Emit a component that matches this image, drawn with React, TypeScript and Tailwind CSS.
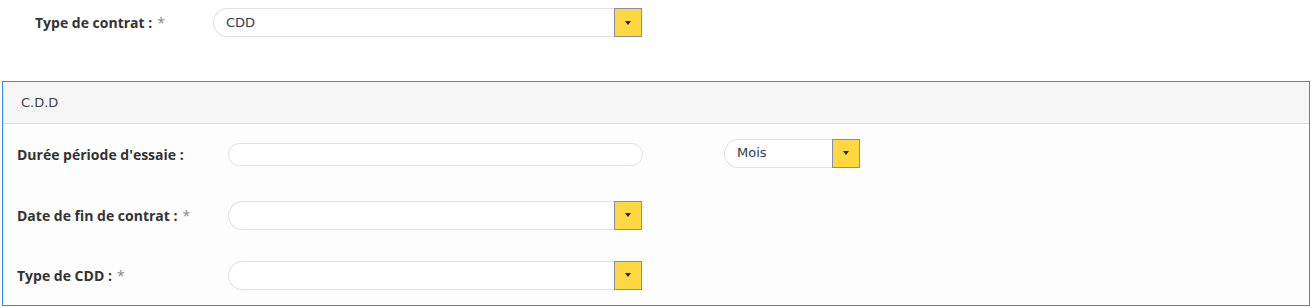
import React from "react";

function Caret() {
  return (
    <div className="w-[28px] h-full shrink-0 bg-[#ffd740] border border-[#8a8f99] flex items-center justify-center">
      <svg width="6" height="4" viewBox="0 0 6 4">
        <path d="M0 0H6L3 4Z" fill="#222" />
      </svg>
    </div>
  );
}

function Select({ value, width }: { value?: string; width: string }) {
  return (
    <div className={`${width} h-[29px] flex items-stretch`}>
      <div className="flex-1 rounded-l-[15px] border border-r-0 border-[#dde1e6] bg-white flex items-center pl-[12px] text-[13px] text-[#2c3e50]">
        {value}
      </div>
      <Caret />
    </div>
  );
}

function Label({ text, required }: { text: string; required?: boolean }) {
  return (
    <div className="text-[14px] font-bold text-[#333] font-['Open_Sans',sans-serif]">
      {text}
      {required && <span className="font-normal text-[#888] ml-[5px]">*</span>}
    </div>
  );
}

export default function App() {
  return (
    <div className="w-[1312px] h-[308px] bg-white font-['DejaVu_Sans',sans-serif]">
      {/* Top field */}
      <div className="flex items-center h-[45px]">
        <div className="w-[213px] pl-[35px]">
          <Label text="Type de contrat :" required />
        </div>
        <Select value="CDD" width="w-[429px]" />
      </div>

      {/* CDD panel */}
      <div className="mt-[36px] ml-[2px] w-[1308px] h-[225px] border border-[#2f8af5] bg-[#fdfdfd]">
        <div className="h-[42px] bg-[#f5f5f5] border-b border-[#dcdcdc] flex items-center pl-[18px] text-[13px] text-[#444]">
          C.D.D
        </div>

        <div className="flex items-center h-[61px]">
          <div className="w-[225px] pl-[14px]">
            <Label text="Durée période d'essaie :" />
          </div>
          <div className="w-[415px] h-[23px] rounded-full border border-[#dde1e6] bg-white" />
          <div className="ml-[81px] mb-[3px]">
            <Select value="Mois" width="w-[136px]" />
          </div>
        </div>

        <div className="flex items-center h-[60px]">
          <div className="w-[225px] pl-[14px]">
            <Label text="Date de fin de contrat :" required />
          </div>
          <Select width="w-[414px]" />
        </div>

        <div className="flex items-center h-[60px]">
          <div className="w-[225px] pl-[14px]">
            <Label text="Type de CDD :" required />
          </div>
          <Select width="w-[414px]" />
        </div>
      </div>
    </div>
  );
}
